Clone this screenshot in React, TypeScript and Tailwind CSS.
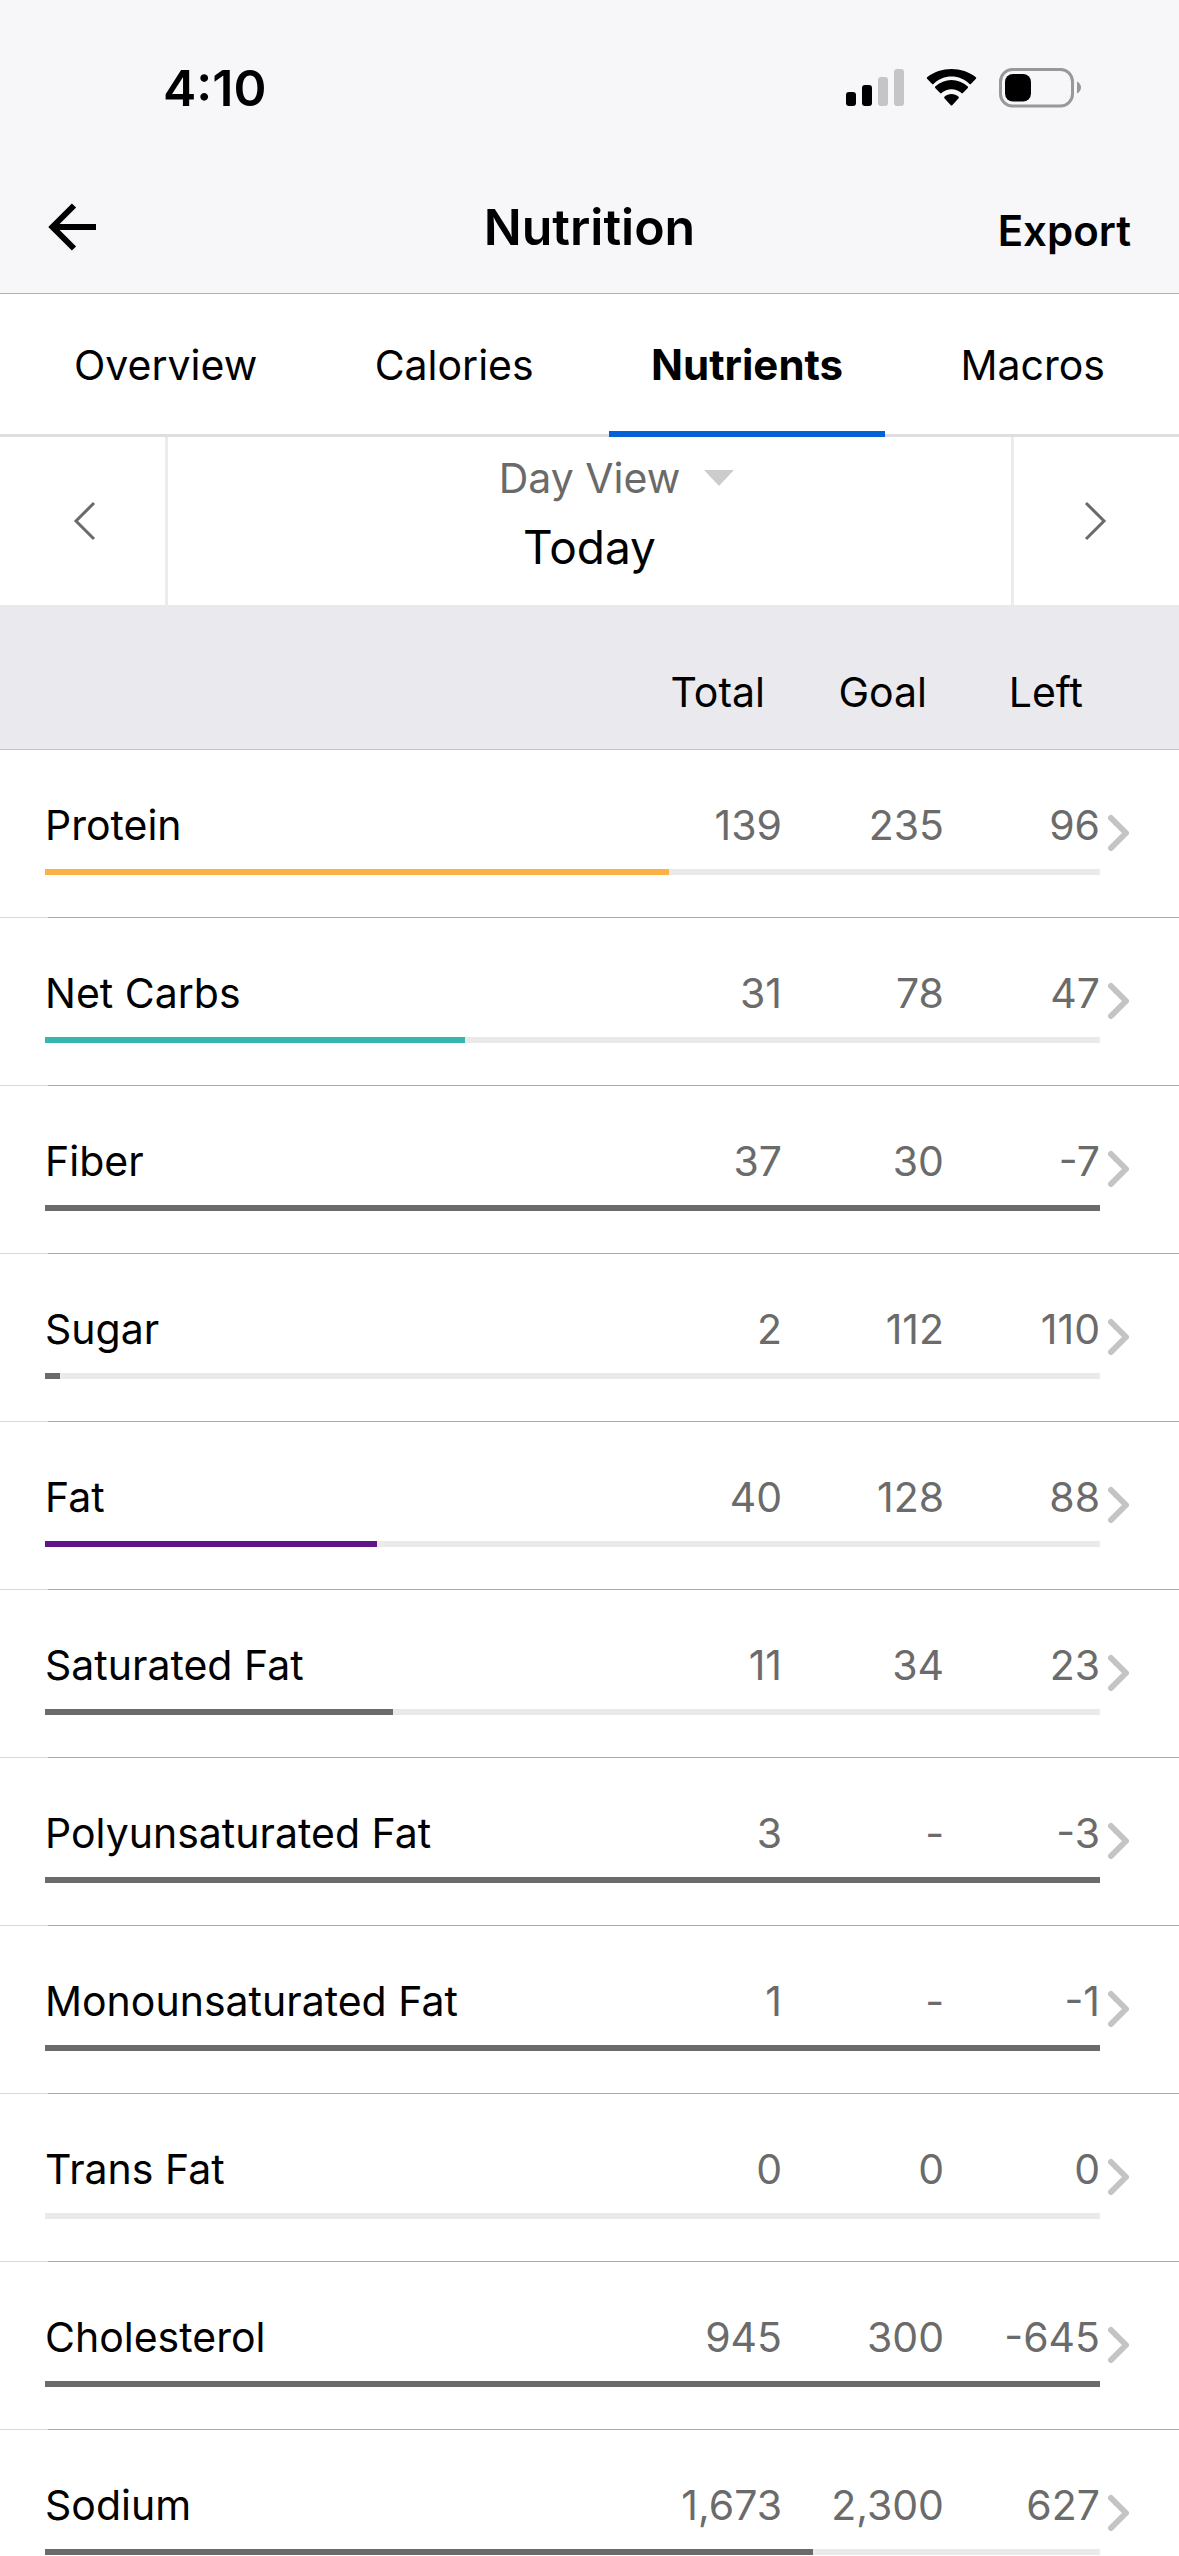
import { useState } from 'react';
import { clsx } from 'clsx';

interface Nutrient {
  name: string;
  total: string;
  goal: string;
  left: string;
  percent: number;
  color: string;
}

const TABS = ['Overview', 'Calories', 'Nutrients', 'Macros'];

const NUTRIENTS: Nutrient[] = [
  { name: 'Protein', total: '139', goal: '235', left: '96', percent: 59.1, color: 'bg-[#fcb144]' },
  { name: 'Net Carbs', total: '31', goal: '78', left: '47', percent: 39.8, color: 'bg-[#37b5b0]' },
  { name: 'Fiber', total: '37', goal: '30', left: '-7', percent: 100, color: 'bg-[#6b6b6b]' },
  { name: 'Sugar', total: '2', goal: '112', left: '110', percent: 1.4, color: 'bg-[#6b6b6b]' },
  { name: 'Fat', total: '40', goal: '128', left: '88', percent: 31.5, color: 'bg-[#5f1585]' },
  { name: 'Saturated Fat', total: '11', goal: '34', left: '23', percent: 33, color: 'bg-[#6b6b6b]' },
  { name: 'Polyunsaturated Fat', total: '3', goal: '-', left: '-3', percent: 100, color: 'bg-[#6b6b6b]' },
  { name: 'Monounsaturated Fat', total: '1', goal: '-', left: '-1', percent: 100, color: 'bg-[#6b6b6b]' },
  { name: 'Trans Fat', total: '0', goal: '0', left: '0', percent: 0, color: 'bg-[#6b6b6b]' },
  { name: 'Cholesterol', total: '945', goal: '300', left: '-645', percent: 100, color: 'bg-[#6b6b6b]' },
  { name: 'Sodium', total: '1,673', goal: '2,300', left: '627', percent: 72.8, color: 'bg-[#6b6b6b]' },
];

function StatusBar() {
  return (
    <div className="flex items-center justify-between pt-[58px] pl-[163px] pr-[97px]">
      <span className="text-[50px] leading-[60px] font-semibold">4:10</span>
      <div className="flex items-center gap-[22px]">
        <svg className="h-[38px] w-[58px]" viewBox="0 0 58 38" aria-hidden="true">
          <rect x="0" y="23" width="10" height="14" rx="3" fill="#000" />
          <rect x="16" y="16" width="10" height="21" rx="3" fill="#000" />
          <rect x="32" y="8" width="10" height="29" rx="3" fill="#c5c5c7" />
          <rect x="48" y="0" width="10" height="37" rx="3" fill="#c5c5c7" />
        </svg>
        <svg className="h-[38px] w-[51px]" viewBox="0 0 51 38" aria-hidden="true">
          <path d="M25.5 7.6c6.8 0 13.2 2.7 18 7.3.4.4 1 .4 1.4 0l5-5.1c.4-.4.4-1.1 0-1.5C36.3-2.7 14.7-2.7 1.1 8.3c-.4.4-.4 1.1 0 1.5l5 5.1c.4.4 1 .4 1.4 0 4.8-4.6 11.2-7.3 18-7.3z" />
          <path d="M25.5 20.2c3.7 0 7.3 1.4 10 3.9.4.4 1 .4 1.4 0l4.9-5.1c.4-.4.4-1.1 0-1.5-9.2-8.7-23.4-8.7-32.6 0-.4.4-.4 1.1 0 1.5l4.900 5.100c.4.4 1 .4 1.400 0 2.700-2.500 6.300-3.900 10-3.900z" />
          <path d="M32.6 29.2c.4-.4.4-1.1 0-1.5-4.100-3.500-10.100-3.500-14.200 0-.4.4-.4 1.100 0 1.500l6.400 7c.4.4 1 .4 1.400 0z" />
        </svg>
        <svg className="h-[40px] w-[83px]" viewBox="0 0 83 40" aria-hidden="true">
          <rect x="1.5" y="1.5" width="72" height="36.5" rx="12" fill="none" stroke="#98989a" strokeWidth="3" />
          <rect x="6" y="6" width="26" height="27.5" rx="8" fill="#000" />
          <path d="M78 13.5v12c2.400-1 4-3.400 4-6s-1.600-5-4-6z" fill="#98989a" />
        </svg>
      </div>
    </div>
  );
}

function NavBar() {
  return (
    <div className="grid grid-cols-[1fr_auto_1fr] items-center pt-[79px] pb-9 px-12">
      <button aria-label="Back" className="justify-self-start cursor-pointer">
        <svg className="h-12 w-12" viewBox="0 0 48 48" fill="none" stroke="#000" strokeWidth="6" aria-hidden="true">
          <path d="M26 2.500L4.500 24 26 45.500M4 24h44" />
        </svg>
      </button>
      <h1 className="text-[50px] leading-[60px] font-semibold">Nutrition</h1>
      <button className="justify-self-end pt-2 text-[42px] leading-[48px] font-semibold cursor-pointer">Export</button>
    </div>
  );
}

export default function App() {
  const [activeTab, setActiveTab] = useState('Nutrients');

  return (
    <div className="h-screen flex flex-col bg-white text-black font-['Inter',sans-serif]">
      <header className="bg-[#f7f7f9] border-b border-[#b2b2b5]">
        <StatusBar />
        <NavBar />
      </header>

      {/* Tabs */}
      <nav className="flex justify-between px-8 border-b-3 border-[#dedee0]">
        {TABS.map((tab) => (
          <button
            key={tab}
            onClick={() => setActiveTab(tab)}
            className={clsx(
              'px-[42px] pt-[46px] pb-[41px] -mb-[3px] border-b-6 leading-[50px] cursor-pointer',
              activeTab === tab ? 'border-[#0461d8] text-[42px] font-bold' : 'border-transparent text-[41px]'
            )}
          >
            {tab}
          </button>
        ))}
      </nav>

      {/* Date selector */}
      <div className="flex text-[#6a6a6a]">
        <button aria-label="Previous day" className="w-[168px] pl-1 flex items-center justify-center border-r-3 border-[#ebebec] cursor-pointer">
          <svg className="h-10 w-6" viewBox="0 0 24 40" fill="none" stroke="currentColor" strokeWidth="3" aria-hidden="true">
            <path d="M21 2L3 20l18 18" />
          </svg>
        </button>
        <div className="flex-1 flex flex-col items-center pt-[13px] pb-[26px]">
          <button className="flex items-center gap-6 pl-[54px] text-[41px] leading-[56px] cursor-pointer">
            Day View
            <svg className="h-4 w-[30px]" viewBox="0 0 30 16" fill="#cccccc" aria-hidden="true">
              <path d="M0 0h30L15 16z" />
            </svg>
          </button>
          <span className="pt-[9px] text-[46px] leading-[64px] text-black">Today</span>
        </div>
        <button aria-label="Next day" className="w-[168px] pr-1 flex items-center justify-center border-l-3 border-[#ebebec] cursor-pointer">
          <svg className="h-10 w-6" viewBox="0 0 24 40" fill="none" stroke="currentColor" strokeWidth="3" aria-hidden="true">
            <path d="M3 2l18 18L3 38" />
          </svg>
        </button>
      </div>

      {/* Nutrient list */}
      <div className="flex-1 overflow-y-auto [scrollbar-width:none]">
        <table className="w-full table-fixed border-separate border-spacing-0 text-[41px] leading-[50px]">
          <colgroup>
            <col />
            <col className="w-[200px]" />
            <col className="w-[162px]" />
            <col className="w-[156px]" />
            <col className="w-[79px]" />
          </colgroup>
          <thead className="bg-[#eae9ed]">
            <tr className="text-right">
              <td className="border-b border-[#c4c4c7]" />
              <th className="pt-[62px] pb-8 pr-[17px] font-normal border-b border-[#c4c4c7]">Total</th>
              <th className="pt-[62px] pb-8 pr-[17px] font-normal border-b border-[#c4c4c7]">Goal</th>
              <th className="pt-[62px] pb-8 pr-[17px] font-normal border-b border-[#c4c4c7]">Left</th>
              <td className="border-b border-[#c4c4c7]" />
            </tr>
          </thead>
          {NUTRIENTS.map((n) => (
            <tbody key={n.name}>
              <tr className="text-right text-[#6b6b6b]">
                <th className="pt-[50px] pb-[19px] pl-[45px] text-left font-normal text-black whitespace-nowrap">{n.name}</th>
                <td className="pt-[50px] pb-[19px]">{n.total}</td>
                <td className="pt-[50px] pb-[19px]">{n.goal}</td>
                <td className="pt-[50px] pb-[19px]">{n.left}</td>
                <td className="pt-[60px] pl-2 align-top">
                  <button aria-label={`${n.name} details`} className="block cursor-pointer">
                    <svg className="h-[46px] w-[22px]" viewBox="0 0 22 46" fill="none" stroke="#c4c4c6" strokeWidth="6" strokeLinecap="round" strokeLinejoin="round" aria-hidden="true">
                      <path d="M3 8l15 15L3 38" />
                    </svg>
                  </button>
                </td>
              </tr>
              <tr>
                <td colSpan={5}>
                  <div className="ml-[45px] mr-[79px] h-[6px] bg-[#eaeaeb]">
                    <div className={clsx('h-full', n.color)} style={{ width: `${n.percent}%` }} />
                  </div>
                  {/* Row divider, lighter in the left gutter */}
                  <div className="mt-[42px] flex h-px">
                    <span className="w-12 bg-[#dadadb]" />
                    <span className="flex-1 bg-[#a9a9ab]" />
                  </div>
                </td>
              </tr>
            </tbody>
          ))}
        </table>
      </div>
    </div>
  );
}
